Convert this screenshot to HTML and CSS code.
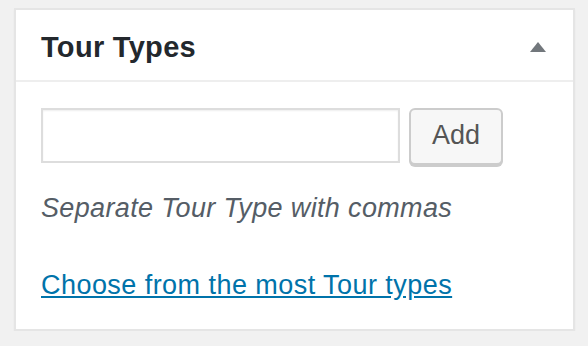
FILE: index.html
```html
<!DOCTYPE html>
<html>

<head>
    <link rel="stylesheet" href="styles.css">
    <title>Tour Types</title>
</head>

<body>
    <div class="postbox">
        <div class="postbox-header">
            <h2>Tour Types</h2>
            <span class="toggle-arrow"></span>
        </div>
        <div class="inside">
            <div class="add-row">
                <input type="text" class="new-tag">
                <button type="button" class="button">Add</button>
            </div>
            <p class="howto">Separate Tour Type with commas</p>
            <a href="#" class="tagcloud-link">Choose from the most Tour types</a>
        </div>
    </div>
</body>

</html>
```

FILE: styles.css
```css
body {
    margin: 0;
    padding: 8px 14px 0 14px;
    background-color: #f1f1f1;
    font-family: "Liberation Sans", Arial, sans-serif;
}

.postbox {
    width: 561px;
    height: 323px;
    box-sizing: border-box;
    background-color: #fff;
    border: 2px solid #e5e5e5;
    box-shadow: 0 2px 2px rgba(0, 0, 0, 0.04);
}

.postbox-header {
    display: flex;
    justify-content: space-between;
    align-items: center;
    height: 70px;
    border-bottom: 2px solid #eee;
    padding: 0 27px 0 25px;
}

.postbox-header h2 {
    margin: 0;
    font-size: 29px;
    font-weight: bold;
    letter-spacing: 0.3px;
    color: #23282d;
    padding-top: 4px;
}

.toggle-arrow {
    width: 0;
    height: 0;
    border-left: 8px solid transparent;
    border-right: 8px solid transparent;
    border-bottom: 10px solid #72777c;
    margin-top: 3px;
}

.inside {
    padding: 26px 25px 0 25px;
}

.add-row {
    display: flex;
    gap: 9px;
}

.new-tag {
    width: 359px;
    height: 55px;
    box-sizing: border-box;
    border: 2px solid #ddd;
    box-shadow: inset 0 1px 2px rgba(0, 0, 0, 0.07);
    margin: 0;
}

.button {
    width: 94px;
    height: 57px;
    box-sizing: border-box;
    background-color: #f7f7f7;
    border: 2px solid #ccc;
    border-radius: 6px;
    box-shadow: 0 2px 0 #ccc;
    font-family: "Liberation Sans", Arial, sans-serif;
    font-size: 27px;
    color: #555;
    padding: 0 0 2px 0;
}

.howto {
    margin: 28px 0 0 0;
    font-size: 27px;
    font-style: italic;
    letter-spacing: 0.35px;
    color: #555d66;
}

.tagcloud-link {
    display: inline-block;
    margin-top: 46px;
    font-size: 27px;
    letter-spacing: 0.45px;
    color: #0073aa;
}
```
